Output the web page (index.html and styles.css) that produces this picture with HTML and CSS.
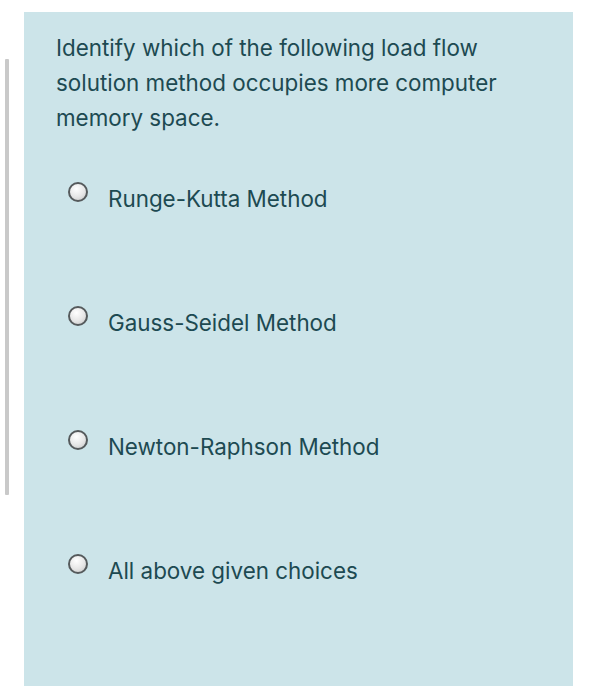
FILE: index.html
```html
<!DOCTYPE html>
<html lang="en">
<head>
<meta charset="utf-8">
<title>Quiz question</title>
<link rel="stylesheet" href="styles.css">
</head>
<body>
<div class="page">
  <div class="scrollbar"></div>
  <div class="card">
    <p class="question">Identify which of the following load flow solution method occupies more computer memory space.</p>
    <div class="options">
      <label class="option"><span class="radio"></span><span class="label">Runge-Kutta Method</span></label>
      <label class="option"><span class="radio"></span><span class="label">Gauss-Seidel Method</span></label>
      <label class="option"><span class="radio"></span><span class="label">Newton-Raphson Method</span></label>
      <label class="option"><span class="radio"></span><span class="label">All above given choices</span></label>
    </div>
  </div>
</div>
</body>
</html>
```

FILE: styles.css
```css
html, body {
  margin: 0;
  padding: 0;
  background: #ffffff;
}

body {
  font-family: Inter, "Liberation Sans", Arial, sans-serif;
  color: #1d4a52;
}

.page {
  display: flex;
  align-items: flex-start;
  padding-left: 5px;
}

.scrollbar {
  width: 4px;
  height: 436px;
  margin-top: 59px;
  background: #c9c9c9;
  border-radius: 1px;
  flex: none;
}

.card {
  margin-top: 12px;
  margin-left: 15px;
  width: 549px;
  height: 674px;
  box-sizing: border-box;
  background: #cce4e9;
  padding: 18px 55px 0 32px;
}

.question {
  margin: 0;
  font-size: 22.4px;
  line-height: 35px;
}

.options {
  display: flex;
  flex-direction: column;
  gap: 89px;
  margin-top: 46px;
}

.option {
  display: flex;
  align-items: flex-start;
  font-size: 22.4px;
  line-height: 35px;
}

.radio {
  flex: none;
  width: 16px;
  height: 16px;
  margin-left: 12px;
  margin-top: 1px;
  border: 2px solid #555a5c;
  border-radius: 50%;
  background: radial-gradient(circle at 40% 30%, #ffffff 0%, #e6e6e6 55%, #c4c4c4 100%);
}

.label {
  margin-left: 20px;
}
```
